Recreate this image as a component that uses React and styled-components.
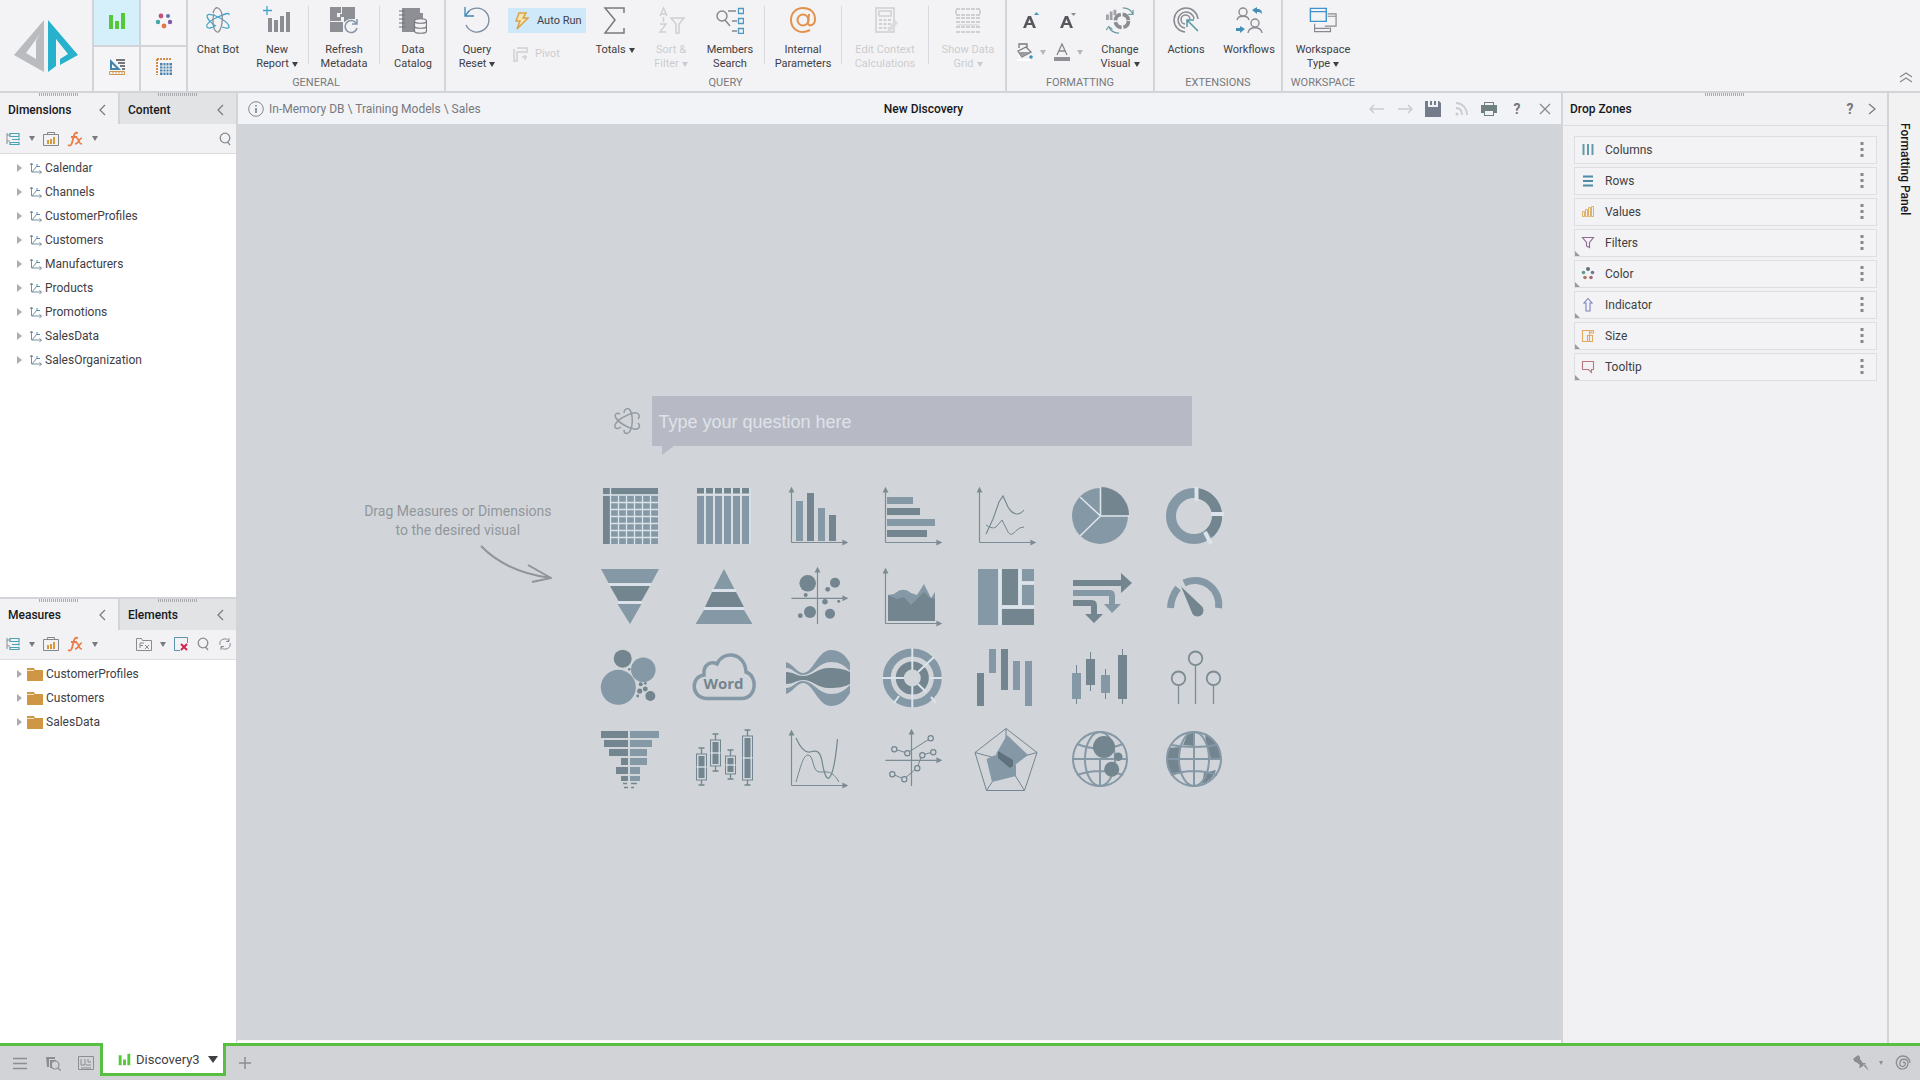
import { useState } from 'react';
import styled, { createGlobalStyle, ThemeProvider } from 'styled-components';

const theme = {
    text: '#3f4044',
    muted: '#77797e',
    line: '#d3d4d8',
    panel: '#f2f2f4',
    canvas: '#d1d5d9',
    green: '#58c041',
    light: '#8598a6',
    dark: '#73858f',
};

const L = theme.light;
const D = theme.dark;

const GlobalStyle = createGlobalStyle`
    * { box-sizing: border-box; }
    body {
        margin: 0;
        font-family: Roboto, 'Open Sans', sans-serif;
        font-size: 12px;
        color: ${theme.text};
        background-color: ${theme.panel};
    }
    button, input {
        font: inherit;
        color: inherit;
    }
    button {
        padding: 0;
        border: 0;
        background: none;
        cursor: pointer;
    }
    ul {
        margin: 0;
        padding: 0;
        list-style: none;
    }
    svg { display: block; flex: none; }
`;

// 共用 -----------------------------------------------------------------------

const Page = styled.div`
    display: flex;
    flex-direction: column;
    min-height: 100vh;
`;

const Glyph = ({ size = 16, box = size, children, ...rest }) => (
    <svg width={size} height={size} viewBox={`0 0 ${box} ${box}`} fill="none" aria-hidden="true" {...rest}>
        {children}
    </svg>
);

const Caret = styled.span`
    display: inline-block;
    width: 0;
    height: 0;
    margin-left: ${props => props.$gap || 0}px;
    vertical-align: middle;
    border-left: ${props => props.$size || 3}px solid transparent;
    border-right: ${props => props.$size || 3}px solid transparent;
    border-top: ${props => (props.$size || 3) + 2}px solid ${props => props.$color || props.theme.text};
`;

const Grip = styled.span`
    position: absolute;
    top: 0;
    left: 50%;
    width: 40px;
    height: 3px;
    margin-left: -20px;
    background: repeating-linear-gradient(90deg, #a9abaf 0 1px, transparent 1px 2px);
`;

const IconButton = styled.button`
    display: flex;
    align-items: center;
    justify-content: center;
    width: ${props => props.$width || 28}px;
    height: 28px;
`;

// 上方工具列 ------------------------------------------------------------------

const Ribbon = styled.header`
    display: flex;
    height: 93px;
    background-color: #f3f3f5;
    border-bottom: 2px solid ${props => props.theme.line};
`;

const LogoArea = styled.a`
    display: flex;
    align-items: center;
    justify-content: center;
    width: 94px;
    border-right: 2px solid ${props => props.theme.line};
`;

const ModeGrid = styled.div`
    display: grid;
    grid-template-columns: 45px 45px;
    grid-template-rows: 45px 44px;
    gap: 2px;
    background-color: ${props => props.theme.line};
    border-right: 2px solid ${props => props.theme.line};
`;

const ModeButton = styled.button`
    display: flex;
    align-items: center;
    justify-content: center;
    padding-bottom: 4px;
    background-color: ${props => props.$active ? '#d5effb' : '#f5f5f7'};
`;

const Group = styled.section`
    display: flex;
    flex-direction: column;
    border-right: ${props => props.$last ? 0 : 2}px solid ${props => props.theme.line};
`;

const GroupItems = styled.div`
    display: flex;
    flex: 1;
`;

const GroupTitle = styled.div`
    height: 16px;
    line-height: 16px;
    font-size: 11px;
    text-align: center;
    color: ${props => props.theme.muted};
`;

const Divider = styled.span`
    width: 1px;
    height: 58px;
    margin: 6px 2px 0;
    background-color: #d9dadd;
`;

const ToolButton = styled.button`
    display: flex;
    flex-direction: column;
    align-items: center;
    gap: 9px;
    width: ${props => props.$width}px;
    padding-top: 6px;
    font-size: 11px;
    line-height: 14px;
    white-space: nowrap;
    opacity: ${props => props.disabled ? 0.22 : 1};
`;

const RunColumn = styled.div`
    display: flex;
    flex-direction: column;
    gap: 8px;
    width: 78px;
    padding-top: 8px;
`;

const RunButton = styled.button`
    display: flex;
    align-items: center;
    gap: 6px;
    height: 25px;
    padding-left: 5px;
    font-size: 11px;
    white-space: nowrap;
    background-color: ${props => props.$active ? '#cfe9fa' : 'transparent'};
    opacity: ${props => props.disabled ? 0.22 : 1};
`;

const FormatGrid = styled.div`
    display: grid;
    grid-template-columns: 36px 38px;
    grid-auto-rows: 32px;
    padding: 4px 0 0 6px;
`;

const FormatButton = styled.button`
    display: flex;
    align-items: center;
    justify-content: center;
    gap: 6px;
`;

const RibbonEnd = styled.div`
    display: flex;
    flex: 1;
    align-items: flex-end;
    justify-content: flex-end;
`;

const Tool = ({ icon, lines, width, caret, disabled }) => (
    <ToolButton type="button" $width={width} disabled={disabled}>
        {icon}
        <span>
            {lines[0]}
            {lines[1] && <br />}
            {lines[1]}
            {caret && <Caret $gap={3} />}
        </span>
    </ToolButton>
);

const Logo = () => (
    <svg width="64" height="54" viewBox="0 0 64 54" aria-label="Home">
        <path d="M30 1V53L0 36ZM26 15L12 34L22 40V22Z" fill="#b9bbbf" fillRule="evenodd" />
        <path d="M34 1L64 36L46 46V40L54 35L42 20V47L34 53Z" fill="#27b1cc" />
    </svg>
);

const BarsIcon = ({ size = 18, color = '#55c73a' }) => (
    <Glyph size={size} box={18}>
        <path d="M1 3h4v14H1zM7 9h4v8H7zM13 1h4v16h-4z" fill={color} />
    </Glyph>
);

const DotsIcon = () => (
    <Glyph size={18}>
        <circle cx="6" cy="4" r="2.4" fill="#c0517c" />
        <circle cx="13" cy="4" r="2" fill="#5b74b8" />
        <circle cx="3" cy="10" r="2.2" fill="#43a8a6" />
        <circle cx="15" cy="10" r="2.2" fill="#7b5aa8" />
        <circle cx="9" cy="14" r="2.4" fill="#e0764a" />
    </Glyph>
);

const DesignIcon = () => (
    <Glyph size={18}>
        <path d="M2 1V12H13ZM4 6L8 10H4Z" fill="#3f83ad" fillRule="evenodd" />
        <path d="M8 2h9M10 5h7M12 8h5M14 11h3" stroke="#75777c" strokeWidth="2" />
        <path d="M1.500 13.500h15v3h-15zM5 14v1.500M8 14v1.500M11 14v1.500M14 14v1.500" stroke="#d0954a" />
    </Glyph>
);

const GridModeIcon = () => (
    <Glyph size={18}>
        <path d="M2 1h15M2 1v16" stroke="#d88a44" strokeWidth="2" strokeDasharray="2 1" />
        <path d="M5 5h12v12H5z" fill="#4a82ab" />
        <path d="M8 5v12M11 5v12M14 5v12M5 8h12M5 11h12M5 14h12" stroke="#f5f5f7" />
    </Glyph>
);

const AtomIcon = ({ size = 28, a = '#45a5c9', b = '#8b8e93' }) => (
    <Glyph size={size} box={28}>
        <path d="M12 20C8 18 3 13 3 10C3 7 10 9 14 11C20 14 25 18 25 21C25 23 21 22 18 21" stroke={a} strokeWidth="1.300" />
        <path d="M25 9C26 6 20 8 14 11C7 14 2 18 3 21C4 23 8 22 11 20" stroke={a} strokeWidth="1.300" />
        <path d="M9 7C10 3 12 1 14 2C18 4 19 11 18 17C17 23 15 27 13 26C10 25 9 20 9 14C9 12 9 10 10 8" stroke={b} strokeWidth="1.300" />
    </Glyph>
);

const AskIcon = () => (
    <Glyph size={28}>
        <path d="M11 6C11 2 15 0 17 3C20 8 20 19 17 24C15 28 11 27 11 23M8 20C4 23 1 21 2 18C4 13 13 8 20 6C25 5 28 8 25 12M7 7C3 5 1 8 3 11C6 16 15 21 21 22C26 23 28 19 25 16" stroke="#959ba2" strokeWidth="1.500" />
    </Glyph>
);

const NewReportIcon = () => (
    <Glyph size={28}>
        <path d="M4 0v9M0 4.500h9" stroke="#3fa5ce" strokeWidth="1.300" />
        <path d="M5 12h4v14H5zM11 14h4v12h-4zM17 10h4v16h-4zM23 6h4v20h-4z" fill="#8b8d92" />
    </Glyph>
);

const RefreshMetaIcon = () => (
    <Glyph size={28}>
        <path d="M0 1h11v6h-4v4h4v4H0zM0 16h13v10H0zM12 1h13v12h-5l-3 3h-3v-5h-4V8h2z" fill="#8d8f94" />
        <circle cx="21" cy="21" r="8" fill="#f3f3f5" />
        <path d="M26 17a6 6 0 1 0 1 5M27 13v5h-5" stroke="#8294ab" strokeWidth="1.500" />
    </Glyph>
);

const CatalogIcon = () => (
    <Glyph size={28}>
        <path d="M3 2h18v5h3v8h-8v11H3z" fill="#8d8f94" />
        <path d="M0 5h6M0 9h6M0 13h6M0 17h6M0 21h6" stroke="#6f7176" />
        <path d="M15.500 15v10c0 3 12 3 12 0V15c0-3-12-3-12 0c0 3 12 3 12 0M15.500 20c0 3 12 3 12 0" fill="#f3f3f5" stroke="#77797e" strokeWidth="1.200" />
    </Glyph>
);

const ResetIcon = () => (
    <Glyph size={28}>
        <path d="M5 6A12 12 0 1 1 3 19" stroke="#7c8ba0" strokeWidth="1.300" />
        <path d="M2 1v9h9M2 10L6 5" stroke="#3f86b5" strokeWidth="1.300" />
    </Glyph>
);

const BoltIcon = () => (
    <Glyph size={18}>
        <path d="M6 1h7l-3 5h5L4 17l3-8H3z" stroke="#d8a548" strokeWidth="1.500" fill="#f6e3b4" />
    </Glyph>
);

const PivotIcon = () => (
    <Glyph size={16}>
        <path d="M1 3v12h3V6h10V2H4M9 11h5M12 9v5" stroke="#55575c" strokeWidth="1.500" />
    </Glyph>
);

const SigmaIcon = () => (
    <Glyph size={28}>
        <path d="M23 7V2H4L14 14L4 27H23V22" stroke="#77797e" strokeWidth="1.500" />
    </Glyph>
);

const SortIcon = () => (
    <Glyph size={28}>
        <path d="M3 10L6.500 2L10 10M4 8h5M3 18h6l-6 8h6M6.500 11v5M14 12h13l-5 6v9h-3v-9z" stroke="#55575c" strokeWidth="1.500" />
    </Glyph>
);

const MembersIcon = () => (
    <Glyph size={28}>
        <circle cx="6" cy="10" r="5" stroke="#85878c" strokeWidth="1.400" />
        <path d="M9 14l5 6M12 5h8M16 15h5M16 25h5" stroke="#85878c" strokeWidth="1.400" />
        <path d="M22.500 2.500h5v5h-5zM22.500 12.500h5v5h-5zM22.500 22.500h5v5h-5z" stroke="#4a9ac4" strokeWidth="1.300" />
    </Glyph>
);

const AtIcon = () => (
    <Glyph size={28}>
        <circle cx="14" cy="14" r="5.500" stroke="#e2924b" strokeWidth="2" />
        <path d="M20 8l-1 9c0 4 7 3 7-4C26 6 21 2 14 2S2 7 2 14s5 12 12 12c3 0 5-1 7-2" stroke="#e2924b" strokeWidth="2" />
    </Glyph>
);

const CalcIcon = () => (
    <Glyph size={28}>
        <path d="M5 2h18v24H5zM8 5h12v5H8z" stroke="#55575c" strokeWidth="1.500" />
        <path d="M8 14h12M8 18h12M8 22h12" stroke="#55575c" strokeWidth="2" strokeDasharray="3 1.500" />
        <path d="M24 14l3 3l-8 9l-3 1l1-4z" fill="#888" />
    </Glyph>
);

const ShowGridIcon = () => (
    <Glyph size={28}>
        <path d="M2 3h24v6H2zM2 12h24M2 16h24M2 21h24M2 26h24" stroke="#55575c" strokeWidth="2" strokeDasharray="4 1" />
        <path d="M3 19h22" stroke="#55575c" />
    </Glyph>
);

const FontSizeIcon = ({ up }) => (
    <Glyph size={18}>
        <path d="M1 17L6 5h3l5 12h-3l-1-3H5l-1 3zM6 12h3L7.500 8z" fill="#55575c" fillRule="evenodd" />
        <path d={up ? 'M12 4h5l-2.500-3z' : 'M12 2h5l-2.500 3z'} fill={up ? '#4594bd' : '#888a8f'} />
    </Glyph>
);

const BucketIcon = () => (
    <Glyph size={18}>
        <path d="M3 5V1h8v4M2 8l8-4l5 5l-9 5z" stroke="#77797e" strokeWidth="1.300" />
        <path d="M3 9h11l-8 5z" fill="#9a9ca1" />
        <circle cx="15" cy="14" r="1.800" fill="#3f93bd" />
        <path d="M1 17h14" stroke="#fff" strokeWidth="2" />
    </Glyph>
);

const FontColorIcon = () => (
    <Glyph size={18}>
        <path d="M4 12L9 1l5 11M6 8h6" stroke="#85878c" strokeWidth="1.300" />
        <path d="M1 14h16v4H1z" fill="#8e9095" />
    </Glyph>
);

const ChangeVisualIcon = () => (
    <Glyph size={28} box={30}>
        <path d="M0 9h3v6H0zM4 6h3v9H4zM8 4h3v6H8z" fill="#a0a2a7" />
        <circle cx="17" cy="16" r="7" stroke="#8b8d92" strokeWidth="4" strokeDasharray="9 2" />
        <path d="M18 2c5 0 9 2 11 7M29 4v5h-5M14 29c-5 0-9-1-11-7M0 26l3-4l4 3" stroke="#6a9a9e" strokeWidth="1.200" />
    </Glyph>
);

const ActionsIcon = () => (
    <Glyph size={28}>
        <path d="M26 13A12 12 0 1 0 13 26M22 13A8 8 0 1 0 13 22M18 13A4.500 4.500 0 1 0 13 18" stroke="#898b90" strokeWidth="1.500" />
        <path d="M15 14l11 11M15 21v-7h7" stroke="#55989f" strokeWidth="1.500" />
    </Glyph>
);

const WorkflowsIcon = () => (
    <Glyph size={28}>
        <g stroke="#898b90" strokeWidth="1.400">
            <circle cx="8" cy="6" r="4" />
            <path d="M2 14c1-5 11-5 12 0" />
            <circle cx="20" cy="17" r="4" />
            <path d="M13 27c1-7 13-7 14 0" />
        </g>
        <path d="M17 4l5-3v2c4 0 5 2 5 5c-2-2-3-2-5-2v2zM10 23l-5-3v2H1v3h4v2z" fill="#438fba" />
    </Glyph>
);

const WindowsIcon = () => (
    <Glyph size={28} box={30}>
        <path d="M1.500 2.500h17v14h-17z M1.500 6h17" stroke="#3f93cc" strokeWidth="1.500" />
        <path d="M20 8.500h9v13H17M20 11h9M6 19v8.500h17V23M6 24h16" stroke="#898b90" strokeWidth="1.300" />
    </Glyph>
);

// 左側面板 --------------------------------------------------------------------

const Workspace = styled.div`
    display: flex;
    flex: 1;
`;

const LeftColumn = styled.aside`
    display: flex;
    flex-direction: column;
    width: 236px;
    background-color: #fff;
`;

const TreePanel = styled.section`
    flex: ${props => props.$grow} 1 0;
    border-top: ${props => props.$border ? 2 : 0}px solid ${props => props.theme.line};
`;

const PanelTabs = styled.div`
    display: grid;
    grid-template-columns: 1fr 1fr;
    height: 31px;
    background-color: ${props => props.theme.panel};
`;

const PanelTab = styled.button`
    position: relative;
    display: flex;
    align-items: center;
    justify-content: space-between;
    padding: 2px 9px 0 8px;
    font-weight: 500;
    color: #17181a;
    background-color: ${props => props.$active ? props.theme.panel : '#e2e3e5'};
    border-left: ${props => props.$active ? 0 : 2}px solid ${props => props.theme.line};
`;

const PanelTools = styled.div`
    display: flex;
    align-items: center;
    height: 30px;
    padding-left: 1px;
    background-color: ${props => props.theme.panel};
    border-bottom: 1px solid #dcdde0;
`;

const Spacer = styled.span`
    flex: 1;
`;

const Tree = styled.ul`
    padding-top: 2px;
`;

const TreeRow = styled.button`
    display: flex;
    align-items: center;
    width: 100%;
    height: 24px;
    padding-left: 17px;
    gap: 3px;
    text-align: left;
`;

const Twist = styled.span`
    width: 0;
    height: 0;
    margin-right: ${props => props.$folder ? 2 : 4}px;
    border-top: 4px solid transparent;
    border-bottom: 4px solid transparent;
    border-left: 5px solid #aaacb0;
`;

const AngleIcon = ({ right }) => (
    <Glyph size={12}>
        <path d={right ? 'M3 1l6 5l-6 5' : 'M8 1L3 6l5 5'} stroke="#77797e" strokeWidth="1.200" />
    </Glyph>
);

const HierarchyIcon = () => (
    <Glyph size={14}>
        <path d="M1 1v11M1 3h3M1 9h3" stroke="#8b8d92" />
        <path d="M4 1.500h9v3H4zM7 7.500h6v-2M6 7.500h7v1M4 10.500h9v2H4z" stroke="#4aa3b5" strokeWidth="1.200" />
    </Glyph>
);

const CaseIcon = () => (
    <Glyph size={16}>
        <path d="M.5 3.500h15v11H.5zM4.500 3V1.500h7V3" stroke="#85878c" />
        <path d="M4 9h2v4H4zM7 8h2v5H7zM10 6h2v7h-2z" fill="#d79b3e" />
    </Glyph>
);

const FxIcon = () => (
    <Glyph size={16}>
        <path d="M1 14c3 2 4-1 5-6s2-7 5-6M4 6h6" stroke="#ec7a45" strokeWidth="1.800" />
        <path d="M9 7c3-1 2 6 6 6M15 7c-3 0-3 6-7 6" stroke="#ec7a45" strokeWidth="1.600" />
    </Glyph>
);

const SearchIcon = () => (
    <Glyph size={14}>
        <circle cx="7" cy="6" r="4.800" stroke="#898b90" strokeWidth="1.300" />
        <path d="M9.500 10l2.500 3" stroke="#898b90" strokeWidth="1.300" />
    </Glyph>
);

const FolderFxIcon = () => (
    <Glyph size={16}>
        <path d="M.5 14.500V2.500h5l1 2h9v10zM4 12V7h4M4 9.500h3M9 9l4 4M13 9l-4 4" stroke="#898b90" />
    </Glyph>
);

const RemoveIcon = () => (
    <Glyph size={16}>
        <path d="M7 14.500H1.500v-13h13V7" stroke="#5c93ad" />
        <path d="M8 8l6 6M14 8l-6 6" stroke="#cf2650" strokeWidth="2" />
    </Glyph>
);

const CycleIcon = () => (
    <Glyph size={14}>
        <path d="M2 8A5 5 0 0 1 11 4M12 6A5 5 0 0 1 3 10M11 1v3.500H8M3 13v-3.500h3" stroke="#898b90" />
    </Glyph>
);

const DimensionIcon = () => (
    <Glyph size={13}>
        <path d="M2.500 1v9h10M1 3l1.500-2L4 3M10.500 8.500l2 1.500l-2 2M3 10l5-6" stroke="#77929d" />
        <path d="M8 4.500V2M8 4.500h3" stroke="#4b9aba" />
    </Glyph>
);

const FolderIcon = () => (
    <Glyph size={16}>
        <path d="M0 2h7l1 2h8v11H0z" fill="#cf9646" />
        <path d="M0 4.500h7" stroke="#f5e4cb" />
    </Glyph>
);

const TreeSection = ({ grow, border, tabs, items, folder, extra }) => {
    const [openItem, setOpenItem] = useState('');

    return (
        <TreePanel $grow={grow} $border={border}>
            <PanelTabs>
                <PanelTab type="button" $active><Grip />{tabs[0]}<AngleIcon /></PanelTab>
                <PanelTab type="button"><Grip />{tabs[1]}<AngleIcon /></PanelTab>
            </PanelTabs>
            <PanelTools>
                <IconButton type="button" $width={24} aria-label="Hierarchy"><HierarchyIcon /></IconButton>
                <IconButton type="button" $width={14} aria-label="Hierarchy options"><Caret $color="#77797e" /></IconButton>
                <IconButton type="button" $width={24} aria-label="Model"><CaseIcon /></IconButton>
                <IconButton type="button" $width={24} aria-label="Formula"><FxIcon /></IconButton>
                <IconButton type="button" $width={16} aria-label="Formula options"><Caret $color="#77797e" /></IconButton>
                <Spacer />
                {extra && <>
                    <IconButton type="button" $width={24} aria-label="Folder"><FolderFxIcon /></IconButton>
                    <IconButton type="button" $width={14} aria-label="Folder options"><Caret $color="#77797e" /></IconButton>
                    <IconButton type="button" $width={22} aria-label="Remove"><RemoveIcon /></IconButton>
                </>}
                <IconButton type="button" $width={22} aria-label="Search"><SearchIcon /></IconButton>
                {extra && <IconButton type="button" $width={22} aria-label="Refresh"><CycleIcon /></IconButton>}
            </PanelTools>
            <Tree>
                {items.map(item => (
                    <li key={item}>
                        <TreeRow type="button" aria-expanded={openItem === item} onClick={() => setOpenItem(openItem === item ? '' : item)}>
                            <Twist $folder={folder} />
                            {folder ? <FolderIcon /> : <DimensionIcon />}
                            {item}
                        </TreeRow>
                    </li>
                ))}
            </Tree>
        </TreePanel>
    );
};

// 中央畫布 --------------------------------------------------------------------

const Main = styled.main`
    display: flex;
    flex: 1;
    flex-direction: column;
    border-left: 2px solid ${props => props.theme.line};
    border-bottom: 3px solid #fafafa;
`;

const MainHeader = styled.div`
    display: flex;
    align-items: center;
    height: 31px;
    padding: 1px 2px 0 10px;
    background-color: #f2f3f6;
`;

const Crumb = styled.div`
    display: flex;
    flex: 1 1 0;
    align-items: center;
    gap: 5px;
    color: ${props => props.theme.muted};
`;

const Title = styled.h1`
    margin: 0 0 0 40px;
    font-size: 12px;
    font-weight: 500;
    color: #17181a;
`;

const HeaderTools = styled.div`
    display: flex;
    flex: 1 1 0;
    justify-content: flex-end;
`;

const Canvas = styled.div`
    display: flex;
    flex: 1;
    align-items: center;
    padding: 22px 0 0 24px;
    background-color: ${props => props.theme.canvas};
`;

const Board = styled.div`
    display: grid;
    flex: 1;
    grid-template-columns: 1fr 628px 1fr;
    row-gap: 38px;
`;

const Ask = styled.label`
    display: flex;
    grid-column: 2;
    align-items: center;
    gap: 11px;
    padding: 0 34px 0 15px;
`;

const AskBox = styled.span`
    position: relative;
    display: flex;
    flex: 1;

    &::after {
        content: '';
        position: absolute;
        top: 100%;
        left: 10px;
        border-top: 9px solid #b7bac5;
        border-right: 12px solid transparent;
    }
`;

const AskInput = styled.input`
    width: 100%;
    height: 50px;
    padding: 4px 7px 0;
    font-family: 'Liberation Sans', Arial, sans-serif;
    font-size: 18px;
    background-color: #b7bac5;
    border: 0;
    border-radius: 0;

    &::placeholder {
        color: #dfe2e8;
        opacity: 1;
    }
`;

const Hint = styled.div`
    display: flex;
    grid-column: 1;
    flex-direction: column;
    align-items: center;
    justify-self: end;
    padding: 18px 46px 0 0;
    font-size: 14px;
    line-height: 19px;
    text-align: center;
    color: #92979c;
`;

const HintArrow = styled.svg`
    align-self: flex-end;
    margin-top: 5px;
`;

const Visuals = styled.div`
    display: grid;
    grid-column: 2;
    grid-template-columns: repeat(7, 64px);
    gap: 17px 30px;
`;

const VisualButton = styled.button`
    width: 64px;
    height: 64px;

    svg { overflow: visible; }
`;

const Axis = () => <path d="M5.500 58.500V6M5.500 58.500H58M3.500 8l2-4l2 4zM57 56.500l4 2l-4 2z" stroke="#7d8b94" strokeWidth="1.200" fill="#7d8b94" />;
const Cross = ({ y = 33.3 }) => <path d={`M31.500 59V5M5.500 ${y}H59M29.500 7l2-4l2 4zM57 ${y - 2}l4 2l-4 2z`} stroke="#7d8b94" strokeWidth="1.200" fill="#7d8b94" />;

const Rects = ({ list }) => list.map(([x, y, x2, y2, dark], i) => (
    <rect key={i} x={x} y={y} width={x2 - x} height={y2 - y} fill={dark ? D : L} />
));

const Dots = ({ list }) => list.map(([cx, cy, r, dark], i) => (
    <circle key={i} cx={cx} cy={cy} r={r} fill={dark ? D : L} />
));

const gap = { stroke: '#dbe4eb', strokeWidth: 1.3 };

const visuals = [
    ['Grid', <>
        <path d="M5 4h55v56H5z" fill={L} />
        <path d="M5 4h55v6H5zM5 12h7v48H5z" fill={D} />
        <path d="M12.500 4v56M5 11h55M20.500 12v48M28.500 12v48M36.500 12v48M44.500 12v48M52.500 12v48M12 18.500h48M12 25.500h48M12 32.500h48M12 39.500h48M12 46.500h48M12 53.500h48" {...gap} />
    </>],
    ['Columns', [5, 14, 23, 32, 41, 50].map(x => (
        <g key={x}>
            <path d={`M${x} 4h7v5.500h-7z`} fill={D} />
            <path d={`M${x} 12h7v48h-7z`} fill={L} />
            <path d={`M${x + 8} 4v56M${x} 10.700h7`} {...gap} />
        </g>
    ))],
    ['Column chart', <><Axis /><Rects list={[[10, 17, 17, 57], [21, 9, 28, 57, 1], [32, 24, 39, 57], [43, 31, 50, 57, 1]]} /></>],
    ['Bar chart', <><Axis /><Rects list={[[7, 13, 33, 20], [7, 24, 40, 31, 1], [7, 35, 55, 42], [7, 46, 47, 53, 1]]} /></>],
    ['Line chart', <>
        <Axis />
        <path d="M12 50L19 35L25 18L29 12L34 23C38 30 44 33 50 26" stroke={D} strokeWidth="1.100" />
        <path d="M12 41C15 43 19 45 22 43L28 36L33 46C36 53 39 50 43 46Q46 43 50 43" stroke={D} strokeWidth="1" />
    </>],
    ['Pie chart', <>
        <circle cx="32" cy="32" r="28" fill={L} />
        <path d="M33 31V3A28 28 0 0 1 61 31Z" fill={D} />
        <path d="M32.500 3V32H61M32.500 32L12 52M32.500 32L12 13" {...gap} strokeWidth="1.600" />
    </>],
    ['Donut chart', <>
        <circle cx="32" cy="32" r="23" stroke={L} strokeWidth="10" />
        <path d="M35 9.200A23 23 0 0 1 47 49.500" stroke={D} strokeWidth="10" />
        <path d="M34.500 3v14M49 30h13M43 48l6 12" stroke="#dbe4eb" strokeWidth="4" />
    </>],
    ['Funnel', <>
        <path d="M3 4H61L53.500 18H10.500ZM19.500 39H43.500L32 59Z" fill={L} />
        <path d="M12 21H52L43.500 36H20.500Z" fill={D} />
        <path d="M11 19.500H53M20 37.500H44" {...gap} strokeWidth="2.500" />
    </>],
    ['Pyramid', <>
        <path d="M32 4L42.500 24H21.500ZM12 45H52L60.500 59H3.500Z" fill={L} />
        <path d="M20 27H44L52 42H13Z" fill={D} />
        <path d="M20 25.500H44M12 43.500H52" {...gap} strokeWidth="2.500" />
    </>],
    ['Scatter', <>
        <Cross />
        <Dots list={[[21.7, 18.3, 8.3, 1], [49, 17.7, 5, 1], [41.7, 24.3, 2.4, 1], [19.7, 30, 2, 1], [39, 36.7, 2.7, 1], [52.7, 36.3, 1.5, 1], [24, 47, 6, 1], [44, 48.7, 5, 1], [14.3, 50.7, 2.4, 1]]} />
    </>],
    ['Area chart', <>
        <Axis />
        <path d="M8 30L14 29Q23 21 31 28L37 30L44 19L51 33L55 27V56H8Z" fill={L} />
        <path d="M8 30L17 34L24 32L31 40L38 33L44 27L50 33L55 34V56H8Z" fill={D} />
    </>],
    ['Treemap', <>
        <path d="M26 4V60M46 4V42M28 42H60M48 18H60" {...gap} strokeWidth="3" />
        <Rects list={[[4, 4, 24, 60], [28, 4, 44, 40, 1], [48, 4, 60, 16], [48, 20, 60, 40], [28, 44, 60, 60, 1]]} />
    </>],
    ['Flow', <>
        <path d="M5 15H53V8L64 18L53 28V21H5Z" fill={D} />
        <path d="M5 25H42Q47 25 47 31V39H53L44 48L36 39H41V31H5Z" fill={L} />
        <path d="M5 35H24Q29 35 29 41V49H35L26 58L17 49H23V41H5Z" fill={D} />
    </>],
    ['Gauge', <>
        <path d="M22 18A24 24 0 0 1 56.500 43M8.500 43Q9 32 16 23" stroke={L} strokeWidth="7" />
        <path d="M18 20L41 42A6 6 0 0 1 30 49Z" fill={D} stroke={theme.canvas} />
    </>],
    ['Packed bubbles', <Dots list={[[20.3, 41.3, 17.5], [24.7, 12.7, 9, 1], [45.3, 23.7, 12.3], [52.3, 50, 5, 1], [31.3, 23.3, 1.3, 1], [42.7, 38.3, 2, 1], [47.3, 43, 2.4, 1], [41.7, 45, 2.6, 1], [47.3, 37.3, 1.4, 1], [39.7, 50, 1.4, 1]]} />],
    ['Word cloud', <>
        <path d="M15 52.500C-2 52 -1 30 12 29C11 18 19 15 25 18C31 4 53 6 54 26C66 30 65 52 50 52.500Z" stroke={L} strokeWidth="3.500" />
        <text x="31.500" y="43" textAnchor="middle" fill={D} fontFamily="Open Sans" fontSize="15" fontWeight="700">Word</text>
    </>],
    ['Stream', <>
        <path d="M0 16C7 18 11 27 17 27C27 27 32 4 45 4C54 4 59 9 64 17V25C58 19 53 16 45 16C33 16 27 29 17 29C10 29 7 22 0 22Z" fill={L} />
        <path d="M0 48C7 46 11 37 17 37C27 37 32 60 45 60C54 60 59 55 64 47V39C58 45 53 48 45 48C33 48 27 35 17 35C10 35 7 42 0 42Z" fill={L} />
        <path d="M0 26C8 26 10 30 17 30C27 30 31 22 43 22C53 22 58 23 64 26V38C58 41 53 42 43 42C31 42 27 34 17 34C10 34 8 38 0 38Z" fill={D} />
    </>],
    ['Sunburst', <>
        <circle cx="32.300" cy="32" r="25.500" stroke={L} strokeWidth="8" />
        <circle cx="32.300" cy="32" r="12.500" stroke={D} strokeWidth="8" />
        <path d="M32.300 2V24M2 32H24M62 32H50M32.300 40V62M38 26L54 11M38 38L46 46M51 51L56 57M19 50L14 57" {...gap} strokeWidth="2" />
    </>],
    ['Waterfall', <Rects list={[[3, 27, 10, 60, 1], [15, 3, 22, 27], [27, 3, 34, 44, 1], [39, 15, 46, 44], [51, 15, 58, 60]]} />],
    ['Candlestick', <>
        <path d="M8.500 19V58M22.500 6V45M37.500 23V53M54.500 3V58" stroke={D} />
        <Rects list={[[4, 27, 13, 53], [18, 13, 27, 39, 1], [33, 29, 42, 47], [50, 9, 59, 53, 1]]} />
    </>],
    ['Lollipop', <g stroke="#7d8b94" strokeWidth="1.800">
        <circle cx="33.500" cy="12.300" r="6.800" />
        <circle cx="16.500" cy="32.300" r="6.800" />
        <circle cx="51.500" cy="32.300" r="6.800" />
        <path d="M33.500 19.500V58M16.500 39.500V58M51.500 39.500V58" strokeWidth="1.300" />
    </g>],
    ['Tornado', <>
        <Rects list={[[3, 4, 30, 11, 1], [6, 13, 30, 20, 1], [11, 22, 30, 29, 1], [23, 31, 30, 38, 1], [18, 40, 30, 47, 1], [23, 49, 30, 54, 1], [32, 4, 61, 11], [32, 13, 54, 20], [32, 22, 49, 29], [32, 31, 49, 38], [32, 40, 42, 47], [32, 49, 42, 54]]} />
        <path d="M25 56.500H29M33 56.500H39M26 60.500H30M33 60.500H36" stroke={D} strokeWidth="1.500" />
    </>],
    ['Box plot', [[4.5, 27, 53, 21, 58], [18.5, 13, 39, 7, 44], [33.5, 29, 47, 23, 52], [50.5, 9, 53, 3, 58]].map(([x, y, y2, w, w2]) => (
        <g key={x}>
            <path d={`M${x + 5} ${w}V${w2}M${x + 2} ${w}h6M${x + 2} ${w2}h6`} stroke={D} strokeWidth="1.300" />
            <rect x={x} y={y} width="10" height={y2 - y} fill={theme.canvas} stroke={D} />
            <rect x={x + 2} y={y + 2} width="6" height={y2 - y - 4} fill={D} />
            <path d={`M${x} ${(y + y2) / 2}h10`} {...gap} />
        </g>
    ))],
    ['Curves', <>
        <Axis />
        <path d="M10 11C14 20 18 26 24 25C31 23 34 24 36 34C38 46 41 57 45 48C48 42 50 28 51.500 12" stroke={D} strokeWidth="1.200" />
        <path d="M10 55C14 42 17 28 22 28C28 28 26 44 33 45C41 45 46 43 53 55" stroke={D} />
    </>],
    ['Linked scatter', <>
        <Cross />
        <g stroke={D} strokeWidth="1">
            <path d="M14 22L27 26L51 11M53 25L42 28L37 41L24 52L12 47" />
        </g>
        <g stroke={D} strokeWidth="1.200" fill={theme.canvas}>
            {[[14.3, 22.3], [27.3, 26.3], [50.7, 11.3], [53.3, 25.3], [42.3, 28.3], [37.3, 41.3], [12.3, 47.3], [24.3, 52.3]].map(([x, y]) => <circle key={x} cx={x} cy={y} r="2.600" />)}
        </g>
    </>],
    ['Radar', <>
        <path d="M32 1.500L63 25.500L50.500 63.500H12.500L1 25.500ZM32 1.500V34L63 25.500M32 34L50.500 63.500M32 34L12.500 63.500M32 34L1 25.500" stroke={D} />
        <path d="M33 8L54 28L37 41L22 27Z" fill={L} />
        <path d="M12.500 32L24 27L42 38V49L18 55Z" fill={L} />
        <path d="M24 24L39 33V39L36 41L24 31Z" fill="#5f717d" />
    </>],
    ['Bubble map', <>
        <g stroke={L} strokeWidth="2">
            <circle cx="32" cy="32" r="27" />
            <ellipse cx="32" cy="32" rx="15" ry="27" />
            <path d="M5 32H59M32 32V59M9 17Q32 26 55 17M9 48Q32 40 55 48" />
        </g>
        <Dots list={[[36, 20, 11, 1], [50.3, 29.7, 4.2, 1], [43.7, 42.3, 7.5, 1]]} />
    </>],
    ['Globe', <>
        <path d="M32 4V19L21 18L26 6ZM6 21L18 20L16 32L19 46L10 48Q2 36 6 21ZM43 6Q56 13 59 32H49L44 17ZM42 46L54 43Q51 53 40 57Z" fill={D} />
        <g stroke={L} strokeWidth="2">
            <circle cx="32" cy="32" r="27" />
            <ellipse cx="32" cy="32" rx="15" ry="27" />
            <path d="M5 32H59M32 5V59M9 18Q32 22 55 18M9 48Q32 40 55 48" />
        </g>
    </>],
];

const headerTools = [
    ['Back', <Glyph size={16}><path d="M1 8h14M5 4L1 8l4 4" stroke="#c9cbd0" strokeWidth="1.500" /></Glyph>],
    ['Forward', <Glyph size={16}><path d="M1 8h14M11 4l4 4l-4 4" stroke="#c9cbd0" strokeWidth="1.500" /></Glyph>],
    ['Save', <Glyph size={16}><path d="M0 0h3v6h10V0h1l2 2v14H0zM5 0h2v4H5zM9 0h2v4H9z" fill="#747c8c" /></Glyph>],
    ['Feed', <Glyph size={16}><path d="M3 2c6 0 11 5 11 12M3 7c4 0 6 3 6 7" stroke="#c9cbd0" strokeWidth="1.800" /><circle cx="4" cy="13" r="1.500" fill="#c9cbd0" /></Glyph>],
    ['Print', <Glyph size={16}><path d="M3 1h10v3h3v8h-3v3H3v-3H0V4h3z" fill="#6f807f" /><path d="M4 2h8v2H4zM4 10h8v4H4z" fill="#f2f3f6" /></Glyph>],
];

const CloseIcon = () => (
    <Glyph size={14}><path d="M2 2l10 10M12 2L2 12" stroke="#85878c" strokeWidth="1.200" /></Glyph>
);

const Question = styled.span`
    font-size: 14px;
    font-weight: 700;
    color: #74767b;
`;

// 右側 Drop Zones -------------------------------------------------------------

const DropPanel = styled.aside`
    width: 328px;
    background-color: #f1f1f3;
    border-left: 2px solid ${props => props.theme.line};
    border-right: 2px solid ${props => props.theme.line};
`;

const DropHeader = styled.div`
    position: relative;
    display: flex;
    align-items: center;
    justify-content: space-between;
    height: 33px;
    padding: 0 4px 0 7px;
    font-weight: 500;
    color: #17181a;
    border-bottom: 1px solid #dcdde0;
`;

const DropTools = styled.div`
    display: flex;
`;

const DropList = styled.ul`
    display: flex;
    flex-direction: column;
    gap: 3px;
    padding: 10px 10px 0 11px;
`;

const DropRow = styled.li`
    position: relative;
    display: flex;
    align-items: center;
    height: 28px;
    padding: 0 0 0 5px;
    background-color: #f3f3f5;
    border: 1px solid #dddee1;

    &::after {
        content: '';
        position: absolute;
        display: ${props => props.$corner ? 'block' : 'none'};
        left: 0;
        bottom: 0;
        border-left: 5px solid #999b9f;
        border-top: 5px solid transparent;
    }

    span { flex: 1; padding-left: 9px; }
`;

const SideTab = styled.button`
    display: flex;
    align-items: center;
    justify-content: flex-start;
    width: 31px;
    padding: 30px 0 0;
    writing-mode: vertical-rl;
    font-weight: 500;
    color: #17181a;
    background-color: #f3f2f2;
`;

const KebabIcon = () => (
    <Glyph size={16}><path d="M6.500 0h3v3h-3zM6.500 6h3v3h-3zM6.500 12h3v3h-3z" fill="#85878b" /></Glyph>
);

const zones = [
    ['Columns', false, <path d="M3.500 2v11M8 2v11M12.500 2v11" stroke="#639aa9" strokeWidth="2" />],
    ['Rows', false, <path d="M3 3.500h10M3 8h10M3 12.500h10" stroke="#4f8ba5" strokeWidth="1.800" />],
    ['Values', false, <path d="M2.500 7.500h2v5h-2zM5.500 5.500h2v7h-2zM8.500 3.500h2v9h-2zM11.500 2.500h2v10h-2z" stroke="#dfaf6c" />],
    ['Filters', true, <path d="M2.500 2.500h11l-4 5v5l-3-1.500V7.500z" stroke="#8f6a92" strokeWidth="1.100" />],
    ['Color', true, <><circle cx="8" cy="3" r="2" fill="#6d7077" /><circle cx="3.500" cy="6.500" r="1.800" fill="#5f9c90" /><circle cx="12.500" cy="6.500" r="1.800" fill="#70759c" /><circle cx="5" cy="11.500" r="1.800" fill="#a57c62" /><circle cx="11" cy="11.500" r="1.800" fill="#a56770" /></>],
    ['Indicator', true, <path d="M8 1.500l4 4.500h-2v8H6V6H4z" stroke="#7b83bf" strokeWidth="1.100" />],
    ['Size', true, <path d="M2.500 2.500h7v11h-7zM7.500 7.500h5v6h-5zM11 2.500h2.500v2.500H11z" stroke="#e0a862" strokeWidth="1.100" />],
    ['Tooltip', true, <path d="M2.500 2.500h11v8h-2v3l-3-3h-6z" stroke="#b9787f" strokeWidth="1.100" />],
];

// 下方分頁列 ------------------------------------------------------------------

const TabBar = styled.footer`
    display: flex;
    height: 37px;
    background-color: #d2d3d7;
`;

const BarSection = styled.div`
    display: flex;
    flex: ${props => props.$fill ? 1 : 'none'};
    align-items: center;
    padding: 0 ${props => props.$fill ? 3 : 0}px 0 5px;
    border-top: 3px solid ${props => props.theme.green};
`;

const DocTab = styled.button`
    display: flex;
    align-items: center;
    gap: 5px;
    height: 33px;
    padding: 2px 5px 0 15px;
    font-size: 13px;
    background-color: #fff;
    border: 3px solid ${props => props.theme.green};
    border-top: 0;
`;

const grey = '#8b8d93';

function App() {
    const [question, setQuestion] = useState('');

    return (
        <ThemeProvider theme={theme}>
            <GlobalStyle />
            <Page>
                <Ribbon>
                    <LogoArea href="#"><Logo /></LogoArea>
                    <ModeGrid>
                        <ModeButton type="button" $active aria-label="Discover"><BarsIcon /></ModeButton>
                        <ModeButton type="button" aria-label="Formulate"><DotsIcon /></ModeButton>
                        <ModeButton type="button" aria-label="Illustrate"><DesignIcon /></ModeButton>
                        <ModeButton type="button" aria-label="Tabulate"><GridModeIcon /></ModeButton>
                    </ModeGrid>
                    <Group>
                        <GroupItems>
                            <Tool width={60} icon={<AtomIcon />} lines={['Chat Bot']} />
                            <Tool width={58} icon={<NewReportIcon />} lines={['New', 'Report']} caret />
                            <Divider />
                            <Tool width={66} icon={<RefreshMetaIcon />} lines={['Refresh', 'Metadata']} />
                            <Divider />
                            <Tool width={62} icon={<CatalogIcon />} lines={['Data', 'Catalog']} />
                        </GroupItems>
                        <GroupTitle>GENERAL</GroupTitle>
                    </Group>
                    <Group>
                        <GroupItems>
                            <Tool width={62} icon={<ResetIcon />} lines={['Query', 'Reset']} caret />
                            <RunColumn>
                                <RunButton type="button" $active><BoltIcon />Auto Run</RunButton>
                                <RunButton type="button" disabled><PivotIcon />Pivot</RunButton>
                            </RunColumn>
                            <Tool width={58} icon={<SigmaIcon />} lines={['Totals']} caret />
                            <Tool width={54} icon={<SortIcon />} lines={['Sort &', 'Filter']} caret disabled />
                            <Tool width={64} icon={<MembersIcon />} lines={['Members', 'Search']} />
                            <Divider />
                            <Tool width={72} icon={<AtIcon />} lines={['Internal', 'Parameters']} />
                            <Divider />
                            <Tool width={82} icon={<CalcIcon />} lines={['Edit Context', 'Calculations']} disabled />
                            <Divider />
                            <Tool width={74} icon={<ShowGridIcon />} lines={['Show Data', 'Grid']} caret disabled />
                        </GroupItems>
                        <GroupTitle>QUERY</GroupTitle>
                    </Group>
                    <Group>
                        <GroupItems>
                            <FormatGrid>
                                <FormatButton type="button" aria-label="Increase font"><FontSizeIcon up /></FormatButton>
                                <FormatButton type="button" aria-label="Decrease font"><FontSizeIcon /></FormatButton>
                                <FormatButton type="button" aria-label="Fill color"><BucketIcon /><Caret $color="#b5b7bb" /></FormatButton>
                                <FormatButton type="button" aria-label="Font color"><FontColorIcon /><Caret $color="#b5b7bb" /></FormatButton>
                            </FormatGrid>
                            <Tool width={66} icon={<ChangeVisualIcon />} lines={['Change', 'Visual']} caret />
                        </GroupItems>
                        <GroupTitle>FORMATTING</GroupTitle>
                    </Group>
                    <Group>
                        <GroupItems>
                            <Tool width={62} icon={<ActionsIcon />} lines={['Actions']} />
                            <Tool width={64} icon={<WorkflowsIcon />} lines={['Workflows']} />
                        </GroupItems>
                        <GroupTitle>EXTENSIONS</GroupTitle>
                    </Group>
                    <Group $last>
                        <GroupItems>
                            <Tool width={80} icon={<WindowsIcon />} lines={['Workspace', 'Type']} caret />
                        </GroupItems>
                        <GroupTitle>WORKSPACE</GroupTitle>
                    </Group>
                    <RibbonEnd>
                        <IconButton type="button" aria-label="Collapse ribbon">
                            <Glyph size={14}><path d="M1 7l6-4l6 4M1 12l6-4l6 4" stroke="#85878c" strokeWidth="1.200" /></Glyph>
                        </IconButton>
                    </RibbonEnd>
                </Ribbon>

                <Workspace>
                    <LeftColumn>
                        <TreeSection
                            grow={17}
                            tabs={['Dimensions', 'Content']}
                            items={['Calendar', 'Channels', 'CustomerProfiles', 'Customers', 'Manufacturers', 'Products', 'Promotions', 'SalesData', 'SalesOrganization']}
                        />
                        <TreeSection
                            grow={15}
                            border
                            folder
                            extra
                            tabs={['Measures', 'Elements']}
                            items={['CustomerProfiles', 'Customers', 'SalesData']}
                        />
                    </LeftColumn>

                    <Main>
                        <MainHeader>
                            <Crumb>
                                <Glyph size={16}>
                                    <circle cx="8" cy="8" r="7.300" stroke="#85878c" />
                                    <path d="M8 7v5M8 4v1.500" stroke="#77797e" strokeWidth="1.500" />
                                </Glyph>
                                In-Memory DB \ Training Models \ Sales
                            </Crumb>
                            <Title>New Discovery</Title>
                            <HeaderTools>
                                {headerTools.map(([label, icon]) => (
                                    <IconButton key={label} type="button" aria-label={label}>{icon}</IconButton>
                                ))}
                                <IconButton type="button"><Question>?</Question></IconButton>
                                <IconButton type="button" aria-label="Close"><CloseIcon /></IconButton>
                            </HeaderTools>
                        </MainHeader>
                        <Canvas>
                            <Board>
                                <Ask>
                                    <AskIcon />
                                    <AskBox>
                                        <AskInput
                                            type="text"
                                            aria-label="Question"
                                            placeholder="Type your question here"
                                            value={question}
                                            onChange={e => setQuestion(e.target.value)}
                                        />
                                    </AskBox>
                                </Ask>
                                <Hint>
                                    <span>Drag Measures or Dimensions<br />to the desired visual</span>
                                    <HintArrow width="72" height="38" viewBox="0 0 72 38" fill="none" stroke="#8f959b" strokeWidth="2">
                                        <path d="M1 1Q26 27 71 33M48 20L71 33L52 37" />
                                    </HintArrow>
                                </Hint>
                                <Visuals>
                                    {visuals.map(([label, art]) => (
                                        <VisualButton key={label} type="button" aria-label={label}>
                                            <Glyph size={64}>{art}</Glyph>
                                        </VisualButton>
                                    ))}
                                </Visuals>
                            </Board>
                        </Canvas>
                    </Main>

                    <DropPanel>
                        <DropHeader>
                            <Grip />
                            Drop Zones
                            <DropTools>
                                <IconButton type="button" $width={22}><Question>?</Question></IconButton>
                                <IconButton type="button" $width={22} aria-label="Collapse"><AngleIcon right /></IconButton>
                            </DropTools>
                        </DropHeader>
                        <DropList>
                            {zones.map(([label, corner, art]) => (
                                <DropRow key={label} $corner={corner}>
                                    <Glyph size={16}>{art}</Glyph>
                                    <span>{label}</span>
                                    <IconButton type="button" aria-label={`${label} options`}><KebabIcon /></IconButton>
                                </DropRow>
                            ))}
                        </DropList>
                    </DropPanel>
                    <SideTab type="button">Formatting Panel</SideTab>
                </Workspace>

                <TabBar>
                    <BarSection>
                        <IconButton type="button" $width={30} aria-label="Menu">
                            <Glyph size={14}><path d="M0 2.500h14M0 7.500h14M0 12.500h14" stroke={grey} strokeWidth="1.500" /></Glyph>
                        </IconButton>
                        <IconButton type="button" $width={36} aria-label="Find">
                            <Glyph size={16}>
                                <path d="M1 2h9v2H4v8H2zM5 5h6v1H7v7H5z" fill={grey} />
                                <circle cx="10" cy="10" r="4" stroke={grey} strokeWidth="1.200" />
                                <path d="M13 13l3 3" stroke={grey} strokeWidth="1.200" />
                            </Glyph>
                        </IconButton>
                        <IconButton type="button" $width={29} aria-label="Layout">
                            <Glyph size={16}><path d="M.5 1.500h15v13H.5zM3 4v6h4V4M10 4v3h3M3 13h10M8 10h5" stroke={grey} /></Glyph>
                        </IconButton>
                    </BarSection>
                    <DocTab type="button">
                        <BarsIcon size={13} />
                        Discovery3
                        <Caret $size={5} $gap={3} />
                    </DocTab>
                    <BarSection $fill>
                        <IconButton type="button" aria-label="Add tab">
                            <Glyph size={12}><path d="M6 0v12M0 6h12" stroke={grey} strokeWidth="1.500" /></Glyph>
                        </IconButton>
                        <Spacer />
                        <IconButton type="button" $width={24} aria-label="Pin">
                            <Glyph size={16}><path d="M0 4l5-4l2 2v2l3 4l2 0l1 1l-6 4l-1-1l1-2l-4-3H2zM10 10l6 6l-4-7z" fill={grey} /></Glyph>
                        </IconButton>
                        <IconButton type="button" $width={16} aria-label="Pin options"><Caret $size={2} $color={grey} /></IconButton>
                        <IconButton type="button" aria-label="Activity">
                            <Glyph size={16}><path d="M8 8c1-2 3 0 2 2c-2 3-6 1-5-2c0-5 8-5 8 0c0 6-7 8-10 4C-1 7 3 1 8 1c4 0 7 3 7 7" stroke={grey} strokeWidth="1.300" /></Glyph>
                        </IconButton>
                    </BarSection>
                </TabBar>
            </Page>
        </ThemeProvider>
    );
}

export default App;
